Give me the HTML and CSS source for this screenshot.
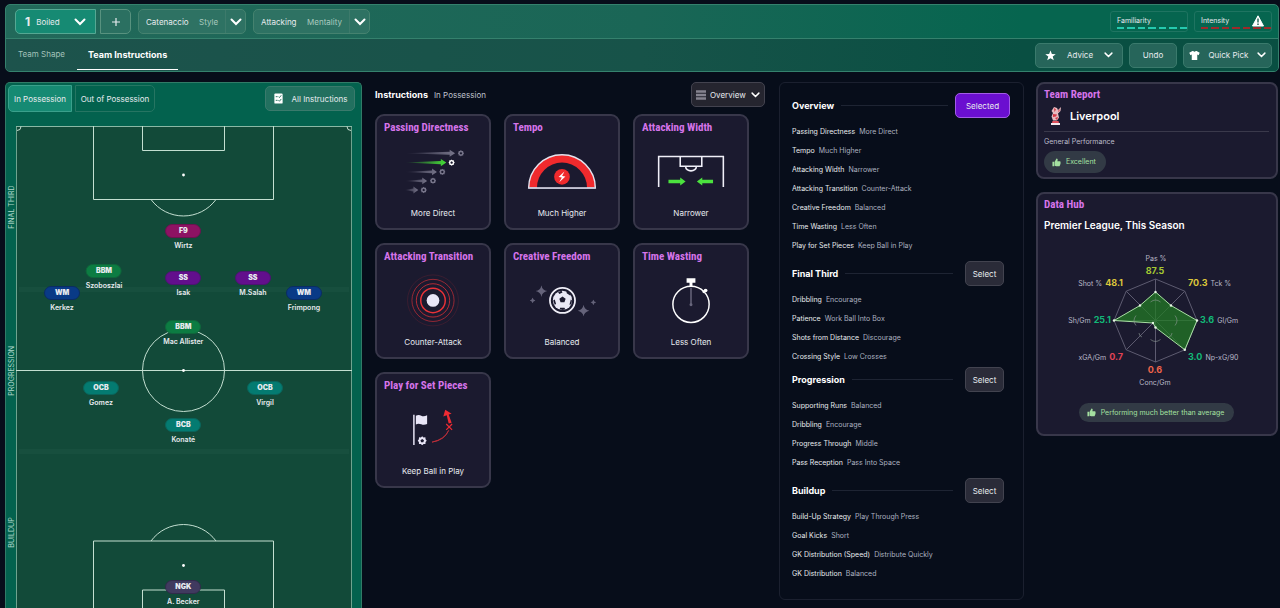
FILE: index.html
```html
<!DOCTYPE html>
<html lang="en">
<head>
	<meta charset="utf-8">
	<meta name="viewport" content="width=device-width, initial-scale=1">
	<title>Team Instructions</title>
	<link rel="stylesheet" href="styles.css">
</head>
<body>
<svg class="defs" aria-hidden="true">
	<symbol id="chevron" viewBox="0 0 12 8"><path d="M1.5 1.5L6 6l4.500-4.500" fill="none" stroke="currentColor" stroke-width="2" stroke-linecap="round"/></symbol>
	<symbol id="thumb" viewBox="0 0 10 10"><path d="M.5 4.200h2v5h-2zM3 4.300L5 .6c1.200 0 1.500.9 1.200 2L6 3.600h2.600c1 0 1.200.9.8 1.500.4.500.3 1.100-.1 1.400.2.600 0 1.100-.5 1.300.1.800-.3 1.400-1.100 1.400H4.600L3 8.600z" fill="currentColor"/></symbol>
	<symbol id="ball" viewBox="0 0 10 10"><path d="M5 .4l1.300 1.300 1.900-.1.200 1.900L9.600 5l-1.200 1.400-.1 1.900-1.900.1L5 9.600 3.600 8.400l-1.900-.1-.1-1.900L.4 5l1.200-1.500.1-1.900 1.900.1z" fill="currentColor"/><path d="M5 3.200l1.800 1.300-.7 2.100H3.900l-.7-2.100z" fill="#1b1a2f"/></symbol>
	<symbol id="spark" viewBox="0 0 10 10"><path d="M5 0q.7 4.300 5 5-4.300.7-5 5-.7-4.300-5-5 4.300-.7 5-5z" fill="currentColor"/></symbol>
</svg>

<header class="topbar">
	<div class="tactic-row">
		<div class="slots">
			<label class="slot">
				<b>1</b>
				<select aria-label="Tactic"><option>Boiled</option></select>
				<svg class="chev"><use href="#chevron"/></svg>
			</label>
			<button class="add" aria-label="Add tactic"><svg viewBox="0 0 10 10"><path d="M5 1v8M1 5h8" stroke="currentColor" stroke-width="1.200"/></svg></button>
		</div>
		<label class="picker">
			<select><option>Catenaccio</option></select>
			<span>Style</span>
			<i><svg class="chev"><use href="#chevron"/></svg></i>
		</label>
		<label class="picker">
			<select><option>Attacking</option></select>
			<span>Mentality</span>
			<i><svg class="chev"><use href="#chevron"/></svg></i>
		</label>
		<div class="meters">
			<div class="meter">
				Familiarity
				<div class="dashes"><i></i><i></i><i></i><i></i><i></i><i></i><i></i></div>
			</div>
			<div class="meter high">
				Intensity
				<svg class="warn" viewBox="0 0 12 12"><path d="M6 .8L11.500 11H.5z" fill="#fff" stroke="#fff" stroke-linejoin="round"/><path d="M6 3.600v4M6 8.600v1.300" stroke="#07503f" stroke-width="1.300"/></svg>
				<div class="dashes"><i></i><i></i><i></i><i></i><i></i><i></i><i></i></div>
			</div>
		</div>
	</div>
	<div class="nav-row">
		<nav>
			<a href="#">Team Shape</a>
			<a href="#" class="active">Team Instructions</a>
		</nav>
		<div class="actions">
			<button class="btn advice">
				<svg class="icon" viewBox="0 0 12 12"><path d="M6 .5l1.500 3.900 4.200.2-3.300 2.600 1.200 4.100L6 9l-3.600 2.300 1.200-4.100L.3 4.600l4.200-.2z" fill="#fff"/></svg>
				Advice
				<svg class="chev small"><use href="#chevron"/></svg>
			</button>
			<button class="btn undo">Undo</button>
			<button class="btn quick">
				<svg class="icon" viewBox="0 0 12 12"><path d="M3.800 1h.8c.5 1.100 2.300 1.100 2.800 0h.8l3.500 2-1.200 2.600-1.500-.6v6H3V5l-1.500.6L.3 3z" fill="#fff"/></svg>
				Quick Pick
				<svg class="chev small"><use href="#chevron"/></svg>
			</button>
		</div>
	</div>
</header>

<main>
	<section class="pitch-panel">
		<div class="pitch-tools">
			<button class="phase on">In Possession</button>
			<button class="phase">Out of Possession</button>
			<button class="btn all">
				<svg class="icon" viewBox="0 0 12 12"><rect x="1.500" y=".5" width="9" height="11" rx="1" fill="#fff"/><path d="M3 4h2M3 8h2M6 4l1 1 2-2.500M6 8l1 1 2-2.500" fill="none" stroke="#236c5c"/></svg>
				All Instructions
			</button>
		</div>
		<div class="pitch-area">
			<div class="thirds">
				<span>FINAL THIRD</span>
				<span>PROGRESSION</span>
				<span>BUILDUP</span>
			</div>
			<div class="pitch">
				<svg class="lines" viewBox="0 0 336 488">
					<rect width="336" height="488" fill="#124a39"/>
					<path d="M3 163.500h330M3 325.500h330" stroke="#174f3e" stroke-width="5"/>
					<g fill="none" stroke="#c3dfd1" stroke-width="1">
						<path d="M.5 0v488M335.500 0v488" stroke="#6fa38f"/>
						<path d="M0 .5h336" stroke="#8ab8a5"/>
						<path d="M0 244.500h336" stroke-width="1.200"/>
						<path d="M77.500 0v73.500h180V0M126.500 0v24.500h82V0"/>
						<path d="M135 73.500a40.300 40.300 0 0 0 65 0"/>
						<circle cx="167.500" cy="244.500" r="41"/>
						<path d="M77.500 488v-73h180v73M126.500 488v-24h82v24"/>
						<path d="M135 415a40.300 40.300 0 0 1 65 0"/>
						<path d="M1 4.500a4 4 0 0 0 4-4M331 .5a4 4 0 0 0 4 4"/>
					</g>
					<g fill="#fff">
						<circle cx="167.500" cy="49" r="1.400"/>
						<circle cx="167.500" cy="244.500" r="1.400"/>
						<circle cx="167.500" cy="439.500" r="1.400"/>
					</g>
				</svg>
				<div class="player f9" style="left:49.800%;top:21.500%"><b>F9</b>Wirtz</div>
				<div class="player bbm" style="left:26.200%;top:29.700%"><b>BBM</b>Szoboszlai</div>
				<div class="player ss" style="left:49.800%;top:31.100%"><b>SS</b>Isak</div>
				<div class="player ss" style="left:70.500%;top:31.100%"><b>SS</b>M.Salah</div>
				<div class="player wm" style="left:13.700%;top:34.200%"><b>WM</b>Kerkez</div>
				<div class="player wm" style="left:85.700%;top:34.200%"><b>WM</b>Frimpong</div>
				<div class="player bbm" style="left:49.800%;top:41.200%"><b>BBM</b>Mac Allister</div>
				<div class="player cb" style="left:25.300%;top:53.600%"><b>OCB</b>Gomez</div>
				<div class="player cb" style="left:74.100%;top:53.700%"><b>OCB</b>Virgil</div>
				<div class="player cb" style="left:49.800%;top:61.300%"><b>BCB</b>Konaté</div>
				<div class="player gk" style="left:49.800%;top:94.500%"><b>NGK</b>A. Becker</div>
			</div>
		</div>
	</section>

	<section class="instructions">
		<div class="instructions-head">
			<h2>Instructions</h2>
			<span>In Possession</span>
			<label class="view">
				<svg viewBox="0 0 10 10"><path d="M0 1.500h10M0 5h10M0 8.500h10" stroke="#85838f" stroke-width="2.400"/></svg>
				<select aria-label="View"><option>Overview</option></select>
				<svg class="chev small"><use href="#chevron"/></svg>
			</label>
		</div>
		<div class="cards">
			<article class="card">
				<h3>Passing Directness</h3>
				<svg viewBox="0 0 100 60">
					<defs>
						<linearGradient id="fadeGrey"><stop offset="0" stop-color="#77758a" stop-opacity="0"/><stop offset="1" stop-color="#77758a"/></linearGradient>
						<linearGradient id="fadeGreen"><stop offset="0" stop-color="#46df38" stop-opacity="0"/><stop offset="1" stop-color="#46df38"/></linearGradient>
					</defs>
					<path d="M21 11.500L67 10V8l5.500 3.500L67 15v-2z" fill="url(#fadeGrey)"/>
					<path d="M21 21L58 19.300v-2l5.500 3.700-5.500 3.700v-2z" fill="url(#fadeGreen)"/>
					<path d="M21 30.500L49 29v-2l5 3.500-5 3.500v-2z" fill="url(#fadeGrey)"/>
					<path d="M21 39.700L39 38.200v-2l5 3.500-5 3.500v-2z" fill="url(#fadeGrey)"/>
					<path d="M21 49L30 47.500v-2l5 3.500-5 3.500v-2z" fill="url(#fadeGrey)"/>
					<g color="#77758a">
						<use href="#ball" x="75" y="8" width="7" height="7"/>
						<use href="#ball" x="56" y="27" width="7" height="7"/>
						<use href="#ball" x="46.500" y="36" width="7" height="7"/>
						<use href="#ball" x="37" y="45.500" width="7" height="7"/>
					</g>
					<g color="#fff"><use href="#ball" x="65.500" y="17.500" width="7" height="7"/></g>
				</svg>
				<p>More Direct</p>
			</article>
			<article class="card">
				<h3>Tempo</h3>
				<svg viewBox="0 0 100 60">
					<path d="M16 47a34 34 0 0 1 68 0z" fill="#f02a2d" stroke="#e4e3ee" stroke-width="1.500"/>
					<path d="M24.500 46.500a25.500 25.500 0 0 1 51 0z" fill="#1b1a2f"/>
					<path d="M16 47h68" stroke="#c9cadb" stroke-width="1.500"/>
					<circle cx="50" cy="35.500" r="8" fill="#f02a2d"/>
					<path d="M52.500 30l-6 5.800 3.300.3-2.600 5 6.300-6-3.400-.4z" fill="#fff"/>
				</svg>
				<p>Much Higher</p>
			</article>
			<article class="card">
				<h3>Attacking Width</h3>
				<svg viewBox="0 0 100 60">
					<g fill="none" stroke="#f0eff8" stroke-width="1.600">
						<path d="M17 46V14.800h66V46M39 14.800v10h22v-10M44.500 25a5.500 4.500 0 0 0 11 0"/>
					</g>
					<path d="M27 38.500h12v-2.300l5.500 4.100-5.500 4.100V42H27zM72.500 38.500h-11v-2.300L56 40.300l5.500 4.100V42h11z" fill="#4be23e"/>
				</svg>
				<p>Narrower</p>
			</article>
			<article class="card">
				<h3>Attacking Transition</h3>
				<svg viewBox="0 0 100 60">
					<g fill="none" stroke="#ea3238">
						<circle cx="50" cy="30" r="26" stroke-opacity=".15"/>
						<circle cx="50" cy="30" r="21.500" stroke-opacity=".6"/>
						<circle cx="50" cy="30" r="17" stroke-opacity=".75"/>
						<circle cx="50" cy="30" r="12.500" stroke-width="1.500"/>
					</g>
					<circle cx="50" cy="30" r="6.500" fill="#e9e6f7"/>
				</svg>
				<p>Counter-Attack</p>
			</article>
			<article class="card">
				<h3>Creative Freedom</h3>
				<svg viewBox="0 0 100 60">
					<circle cx="50.500" cy="30" r="12.800" fill="none" stroke="#f0eff8" stroke-width="1.800"/>
					<circle cx="50.500" cy="30" r="9.800" fill="#e9e8f5"/>
					<g fill="#1b1a2f">
						<path d="M50.500 26l3.200 2.200-1.200 3.800h-4l-1.200-3.800z"/>
						<path d="M46 21.800l3.500-1.600 1 1.700-3.200 1.600zM54.500 20.500l3.500 2 .3 2.500-3.500-2.300zM59 29l1.200 1-.8 4-1.800.5zM41 30l1.600-1 1.300 4.300-1.200 1.500zM48 37.500h4.500l.8 1.500-2.500.8-3-.7z"/>
					</g>
					<g color="#65637a">
						<use href="#spark" x="23" y="14.500" width="12" height="12"/>
						<use href="#spark" x="17" y="27" width="6" height="6"/>
						<use href="#spark" x="66" y="34.500" width="12" height="12"/>
						<use href="#spark" x="79" y="29" width="6" height="6"/>
					</g>
				</svg>
				<p>Balanced</p>
			</article>
			<article class="card">
				<h3>Time Wasting</h3>
				<svg viewBox="0 0 100 60">
					<circle cx="50" cy="34" r="18.500" fill="none" stroke="#fff" stroke-width="1.500"/>
					<path d="M45.500 7.500h9V12h-3v4h-3v-4h-3z" fill="#fff"/>
					<path d="M62 22l3-3" stroke="#fff" stroke-width="2"/>
					<circle cx="65" cy="20" r="1.800" fill="#fff"/>
					<path d="M50 17v17" stroke="#69677d" stroke-width="1.500"/>
					<circle cx="50" cy="34.500" r="1.500" fill="#69677d"/>
				</svg>
				<p>Less Often</p>
			</article>
			<article class="card">
				<h3>Play for Set Pieces</h3>
				<svg viewBox="0 0 100 60">
					<path d="M30.500 15v31" stroke="#e9e6f7" stroke-width="1.500"/>
					<path d="M32.500 16q3-1.500 5.500 0t6-.5v9q-3 1.500-6 .3t-5.500.2z" fill="#e9e6f7"/>
					<g color="#e9e6f7"><use href="#ball" x="34" y="36.500" width="10" height="10"/></g>
					<path d="M49 43q13-3 17-12-4 10-17 12z" fill="#e52b34" stroke="#c0303a" stroke-width=".8"/>
					<path d="M63.500 24.500l6 6M69.500 24.500l-6 6" stroke="#ef2b33" stroke-width="1.200"/>
					<path d="M66 24l-2-8.500-3.500 1.300L62.500 10l6.500 4-3 .8 3 8.500z" fill="#ef2b33"/>
				</svg>
				<p>Keep Ball in Play</p>
			</article>
		</div>
	</section>

	<section class="summary">
		<div class="group">
			<header><h2>Overview</h2><hr><button class="pick chosen">Selected</button></header>
			<dl>
				<div><dt>Passing Directness</dt><dd>More Direct</dd></div>
				<div><dt>Tempo</dt><dd>Much Higher</dd></div>
				<div><dt>Attacking Width</dt><dd>Narrower</dd></div>
				<div><dt>Attacking Transition</dt><dd>Counter-Attack</dd></div>
				<div><dt>Creative Freedom</dt><dd>Balanced</dd></div>
				<div><dt>Time Wasting</dt><dd>Less Often</dd></div>
				<div><dt>Play for Set Pieces</dt><dd>Keep Ball in Play</dd></div>
			</dl>
		</div>
		<div class="group tight">
			<header><h2>Final Third</h2><hr><button class="pick">Select</button></header>
			<dl>
				<div><dt>Dribbling</dt><dd>Encourage</dd></div>
				<div><dt>Patience</dt><dd>Work Ball Into Box</dd></div>
				<div><dt>Shots from Distance</dt><dd>Discourage</dd></div>
				<div><dt>Crossing Style</dt><dd>Low Crosses</dd></div>
			</dl>
		</div>
		<div class="group">
			<header><h2>Progression</h2><hr><button class="pick">Select</button></header>
			<dl>
				<div><dt>Supporting Runs</dt><dd>Balanced</dd></div>
				<div><dt>Dribbling</dt><dd>Encourage</dd></div>
				<div><dt>Progress Through</dt><dd>Middle</dd></div>
				<div><dt>Pass Reception</dt><dd>Pass Into Space</dd></div>
			</dl>
		</div>
		<div class="group">
			<header><h2>Buildup</h2><hr><button class="pick">Select</button></header>
			<dl>
				<div><dt>Build-Up Strategy</dt><dd>Play Through Press</dd></div>
				<div><dt>Goal Kicks</dt><dd>Short</dd></div>
				<div><dt>GK Distribution (Speed)</dt><dd>Distribute Quickly</dd></div>
				<div><dt>GK Distribution</dt><dd>Balanced</dd></div>
			</dl>
		</div>
	</section>

	<aside>
		<section class="report">
			<h3>Team Report</h3>
			<div class="club">
				<svg viewBox="0 0 14 20">
					<path d="M5 1l3 1 1 2 3-3-.5 4L9 7.500l1 4-2 3H4l-1.500-4L4 7 2.500 5z" fill="#e9b9bf"/>
					<path d="M5 2l2 1.500L5.500 6zM9 5l2-2-1 3zM4 8l4 .5-1 2-3 .5zM6 12l3-1-1 3z" fill="#d63744"/>
					<path d="M3.500 15h6l.5 2H3z" fill="#e0505c"/>
					<path d="M2 17h9v2H2z" fill="#f4e9ee"/>
				</svg>
				Liverpool
			</div>
			<p>General Performance</p>
			<span class="badge"><svg><use href="#thumb"/></svg>Excellent</span>
		</section>
		<section class="report hub">
			<h3>Data Hub</h3>
			<h4>Premier League, This Season</h4>
			<svg class="radar" viewBox="0 0 225 144">
				<g fill="none" stroke="#5d5b70">
					<path d="M111.500 29L140.800 41.200 153 70.500 140.800 99.800 111.500 112 82.200 99.800 70 70.500 82.200 41.200z"/>
					<path d="M111.500 29v83M70 70.500h83M82.200 41.200l58.600 58.600M140.800 41.200L82.200 99.800"/>
				</g>
				<path d="M111.500 42L127 55.500 153 70.500 140.800 99.800 111.500 77.500 109 73 70 70.500 96 55.500z" fill="#237a25" fill-opacity=".75" stroke="#a9dfa4"/>
				<path d="M106.500 52q5-4 10 0M131 65.500q4 5 0 10M106.500 89.500q5 4 10 0M92 65.500q-4 5 0 10M125 87q3-1 3-4M98 87q-3-1-3-4" fill="none" stroke="#8d9a95" stroke-opacity=".6"/>
				<g fill="#e6f5e4">
					<circle cx="111.500" cy="42" r="1.200"/><circle cx="127" cy="55.500" r="1.200"/><circle cx="153" cy="70.500" r="1.200"/><circle cx="140.800" cy="99.800" r="1.200"/><circle cx="111.500" cy="77.500" r="1.200"/><circle cx="109" cy="73" r="1.200"/><circle cx="70" cy="70.500" r="1.200"/><circle cx="96" cy="55.500" r="1.200"/>
				</g>
				<g class="stat" text-anchor="middle">
					<text x="112" y="11">Pas %</text>
					<text x="111" y="24" class="val lime">87.5</text>
					<text x="111" y="123" class="val orange">0.6</text>
					<text x="111" y="135">Conc/Gm</text>
				</g>
				<g class="stat" text-anchor="end">
					<text x="79" y="36">Shot % <tspan class="val yellow" dx="1">48.1</tspan></text>
					<text x="67" y="73">Sh/Gm <tspan class="val green" dx="1">25.1</tspan></text>
					<text x="79" y="110">xGA/Gm <tspan class="val red" dx="1">0.7</tspan></text>
				</g>
				<g class="stat">
					<text x="144" y="36"><tspan class="val yellow">70.3</tspan><tspan dx="3">Tck %</tspan></text>
					<text x="156" y="73"><tspan class="val green">3.6</tspan><tspan dx="3">Gl/Gm</tspan></text>
					<text x="144" y="110"><tspan class="val green">3.0</tspan><tspan dx="3">Np-xG/90</tspan></text>
				</g>
			</svg>
			<span class="badge wide"><svg><use href="#thumb"/></svg>Performing much better than average</span>
		</section>
	</aside>
</main>
</body>
</html>
```
FILE: styles.css
```css
*{
	box-sizing: border-box;
}
body{
	background-color: #070d1a;
	margin: 0;
	padding: 4px 1px 0 5px;
	height: 100vh;
	overflow: hidden;
	display: flex;
	flex-direction: column;
	gap: 10px;
	font: 8px/12px Inter,"Liberation Sans",sans-serif;
	color: #e8ebef;
}
h2, h3, h4, p, dl, dd{
	margin: 0;
}
button, select{
	font: inherit;
	color: inherit;
	padding: 0;
	border: 0;
	background: none;
}
select{
	appearance: none;
	outline: none;
}
a{
	color: inherit;
	text-decoration: none;
}
.defs{
	position: absolute;
	width: 0;
	height: 0;
}
.chev{
	width: 12px;
	height: 8px;
	color: #fff;
}
.chev.small{
	width: 9px;
	height: 6px;
}
.icon{
	width: 11px;
	height: 11px;
}

/* top bar */
.topbar{
	flex: none;
	border: 1px solid #35816d;
	border-radius: 5px;
	background: linear-gradient(90deg,#22695a,#1a6656 50%,#06654f 80%);
	overflow: hidden;
}
.tactic-row, .nav-row{
	display: flex;
	align-items: center;
	height: 33px;
	padding: 0 6px 0 9px;
}
.tactic-row{
	gap: 7px;
}
.nav-row{
	justify-content: space-between;
	padding-left: 1px;
	border-top: 1px solid #35816d;
	background: linear-gradient(90deg,#1d534c,#175349 50%,#094f42 80%);
}
.slots{
	display: flex;
	gap: 4px;
}
.slot, .add{
	height: 25px;
	border: 1px solid #55a893;
	background: #168a73;
}
.slot{
	width: 81px;
	display: flex;
	align-items: center;
	gap: 6px;
	padding: 0 9px;
	border-radius: 5px 0 0 5px;
}
.slot b{
	font-size: 12px;
}
.slot .chev{
	margin-left: auto;
}
.add{
	width: 31px;
	border-color: #58927f;
	border-radius: 0 5px 5px 0;
	background: #2b7061;
}
.add svg{
	width: 10px;
	height: 10px;
	display: block;
	margin: auto;
}
.picker{
	display: flex;
	align-items: center;
	gap: 10px;
	height: 25px;
	padding-left: 7px;
	border: 1px solid #45826f;
	border-radius: 5px;
	background: #2e7263;
}
.picker span{
	color: #a9cabf;
}
.picker i{
	display: flex;
	align-items: center;
	height: 23px;
	margin-left: -3px;
	padding: 0 3px 0 4px;
	border-left: 1px solid #3d7a6b;
}
.meters{
	display: flex;
	gap: 6px;
	margin-left: auto;
}
.meter{
	position: relative;
	width: 78px;
	height: 21px;
	padding: 3px 0 0 6px;
	border: 1px solid #1f7461;
	border-radius: 3px;
	font-size: 7px;
}
.dashes{
	display: flex;
	gap: 3px;
}
.dashes i{
	flex: 1;
	height: 2px;
	background: #25c9ae;
}
.high .dashes i{
	background: #9b2a2b;
}
.warn{
	position: absolute;
	right: 7px;
	top: 3px;
	width: 12px;
	height: 12px;
}
nav{
	display: flex;
	gap: 1px;
}
nav a{
	height: 30px;
	line-height: 29px;
	padding: 0 11px;
	color: #a3c2ba;
}
nav .active{
	font-size: 9px;
	font-weight: 700;
	color: #fff;
	border-bottom: 1px solid #fff;
}
.actions{
	display: flex;
	gap: 6px;
}
.btn{
	display: flex;
	align-items: center;
	justify-content: center;
	gap: 8px;
	height: 25px;
	border: 1px solid #3a7a6c;
	border-radius: 5px;
	background: #26655a;
}
.advice{
	width: 88px;
	gap: 11px;
}
.undo{
	width: 48px;
}
.quick{
	width: 89px;
}

main{
	flex: 1;
	min-height: 0;
	display: grid;
	grid-template-columns: 357fr 393fr 245fr 243fr;
	gap: 12px;
	align-items: start;
}

/* pitch */
.pitch-panel{
	height: 100%;
	overflow: hidden;
	padding: 2px 9px 0 2px;
	border: 1px solid #317b67;
	border-bottom: 0;
	border-radius: 5px 5px 0 0;
	background: #03624e;
}
.pitch-tools{
	display: flex;
	align-items: center;
	gap: 3px;
	height: 27px;
	margin: 0 -3px 14px 0;
}
.phase{
	height: 27px;
	width: 80px;
	border: 1px solid #267562;
	border-radius: 0 5px 5px 0;
}
.phase.on{
	width: 64px;
	background: #168a73;
	border-color: #3aa08b;
	border-radius: 5px 0 0 5px;
}
.all{
	width: 90px;
	margin-left: auto;
	background: #22705f;
}
.pitch-area{
	display: grid;
	grid-template-columns: 8px 1fr;
}
.thirds{
	display: flex;
	flex-direction: column;
}
.thirds span{
	flex: 1;
	writing-mode: vertical-rl;
	transform: rotate(180deg);
	text-align: center;
	font-size: 7px;
	line-height: 8px;
	color: #b2d8cb;
}
.pitch{
	position: relative;
}
.lines{
	display: block;
	width: 100%;
}
.player{
	position: absolute;
	display: flex;
	flex-direction: column;
	align-items: center;
	gap: 2px;
	margin-top: -7px;
	transform: translateX(-50%);
	font-size: 7px;
	font-weight: 600;
	white-space: nowrap;
}
.player b{
	width: 36px;
	height: 14px;
	line-height: 12px;
	text-align: center;
	border: 1px solid;
	border-radius: 7px;
}
.f9 b{
	background: #8d1263;
	border-color: #6b124f;
}
.bbm b{
	background: #0c7c42;
	border-color: #0f663b;
}
.ss b{
	background: #620f8c;
	border-color: #4b1470;
}
.wm b{
	background: #093a86;
	border-color: #0a2c63;
}
.cb b{
	background: #047b71;
	border-color: #0a645a;
}
.gk b{
	background: #403a5f;
	border-color: #302b4a;
}

/* instruction cards */
.instructions{
	padding-left: 1px;
}
.instructions-head{
	display: flex;
	align-items: center;
	gap: 6px;
	height: 25px;
	margin-bottom: 7px;
	padding-right: 2px;
}
h2{
	font-size: 9px;
	font-weight: 700;
	color: #fff;
}
.instructions-head span{
	color: #bfc2cc;
}
.view{
	display: flex;
	align-items: center;
	gap: 4px;
	width: 74px;
	height: 25px;
	margin-left: auto;
	padding: 0 4px;
	border: 1px solid #43434f;
	border-radius: 5px;
	background: #25252f;
}
.view svg:first-child{
	width: 10px;
	height: 10px;
}
.view .chev{
	margin-left: auto;
}
.cards{
	display: grid;
	grid-template-columns: repeat(3,1fr);
	gap: 13px;
	padding-right: 18px;
}
.card{
	display: flex;
	flex-direction: column;
	aspect-ratio: 1;
	padding: 5px 7px 9px;
	border: 2px solid #38374a;
	border-radius: 9px;
	background: #1b1a2f;
}
.card svg{
	display: block;
	width: 100%;
	margin-top: 8px;
}
.card p{
	margin-top: auto;
	text-align: center;
}
h3{
	font: 700 11px/13px "Liberation Sans Narrow","Roboto Condensed","Open Sans Condensed",Roboto,sans-serif;
	color: #d674ea;
	white-space: nowrap;
}

/* summary */
.summary{
	padding: 10px 13px 16px 12px;
	border: 1px solid #1b202f;
	border-radius: 6px;
}
.group + .group{
	margin-top: 6px;
}
.tight + .group{
	margin-top: 1px;
}
.group header{
	display: flex;
	align-items: center;
	gap: 7px;
	height: 25px;
	margin-bottom: 4px;
}
.group hr{
	flex: 1;
	margin: 0;
	border: 0;
	border-top: 1px solid #1e2433;
}
.pick{
	width: 39px;
	height: 25px;
	margin: 0 6px 0 5px;
	border: 1px solid #42434f;
	border-radius: 5px;
	background: #2a2b38;
}
.chosen{
	width: 55px;
	margin: 0;
	border-color: #a35ce6;
	background: #6b0fd0;
}
dl div{
	display: flex;
	gap: 4px;
	font-size: 7px;
	line-height: 19px;
	white-space: nowrap;
}
dd{
	color: #adb2c0;
}

/* reports */
aside{
	display: grid;
	gap: 13px;
	padding-right: 1px;
}
.report{
	padding: 4px 7px 4px 6px;
	border: 2px solid #38374a;
	border-radius: 8px;
	background: #1b1a2f;
}
.club{
	display: flex;
	align-items: center;
	gap: 7px;
	height: 31px;
	margin-bottom: 6px;
	padding-left: 5px;
	font-size: 11px;
	font-weight: 600;
	color: #fff;
	border-bottom: 1px solid #3a394b;
}
.club svg{
	width: 14px;
	height: 20px;
}
.report p{
	font-size: 7px;
	line-height: 8px;
	color: #bdbccb;
}
.badge{
	display: flex;
	align-items: center;
	gap: 5px;
	width: max-content;
	height: 22px;
	margin-top: 5px;
	padding: 0 10px 0 8px;
	border-radius: 11px;
	background: #323a45;
	font-size: 7px;
	color: #a4e0a0;
}
.badge svg{
	width: 9px;
	height: 9px;
}
h4{
	margin-top: 7px;
	font-size: 10px;
	line-height: 15px;
	font-weight: 600;
	color: #fff;
}
.radar{
	display: block;
	width: 100%;
	margin-top: 17px;
}
.badge.wide{
	height: 19px;
	margin: 9px auto 8px;
}
.stat{
	font-size: 7px;
	fill: #b9b8c7;
}
.val{
	font-size: 9px;
	font-weight: 700;
}
.lime{
	fill: #a5c832;
}
.yellow{
	fill: #dcc63b;
}
.green{
	fill: #12b877;
}
.red{
	fill: #e24355;
}
.orange{
	fill: #ee644a;
}
```
